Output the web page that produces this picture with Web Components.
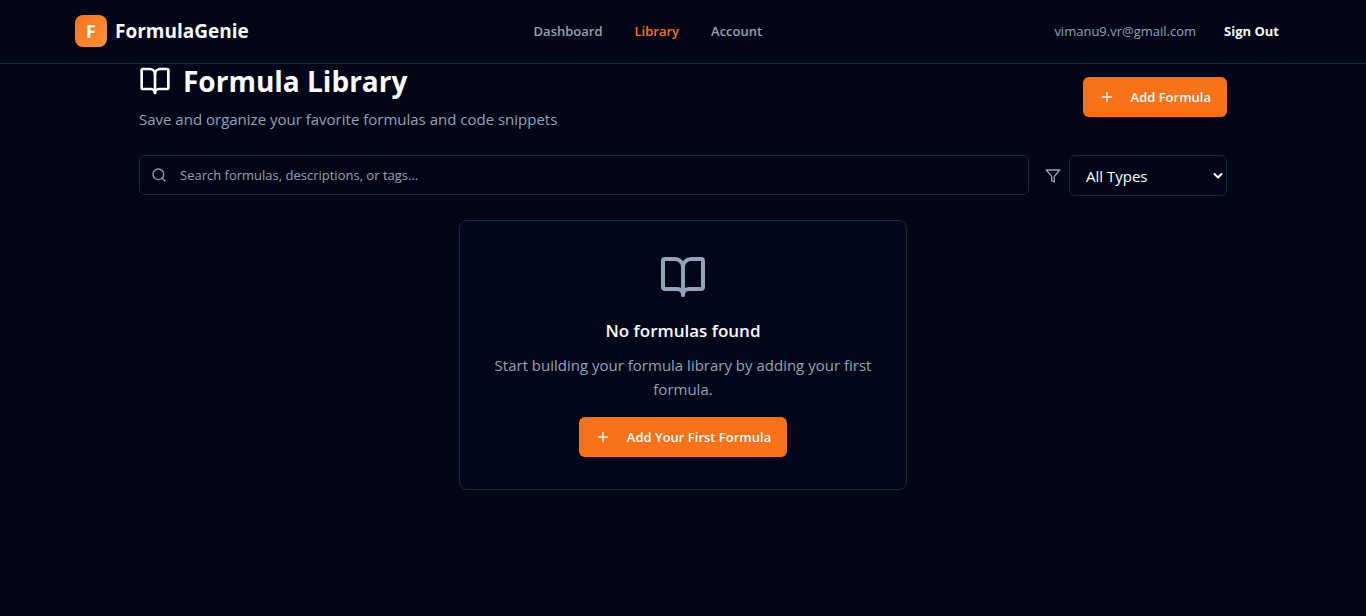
<!DOCTYPE html>
<html lang="en">
<head>
<meta charset="utf-8">
<meta name="viewport" content="width=device-width, initial-scale=1">
<title>FormulaGenie</title>
<style>
  :root {
    --bg: #020617;
    --card: #020819;
    --border: #1e293b;
    --fg: #f8fafc;
    --muted: #94a3b8;
    --accent: #f97316;
    --text-sm: 13px;
    --text-md: 15px;
  }
  body {
    margin: 0;
    min-height: 100vh;
    background: var(--bg);
    color: var(--fg);
    font-family: "Open Sans", "Noto Sans", sans-serif;
    font-size: var(--text-md);
    line-height: 24px;
  }
</style>
</head>
<body>
<fg-app></fg-app>
<script>
const ICONS = {
  book: '<path d="M12 7v14"/><path d="M3 18a1 1 0 0 1-1-1V4a1 1 0 0 1 1-1h5a4 4 0 0 1 4 4 4 4 0 0 1 4-4h5a1 1 0 0 1 1 1v13a1 1 0 0 1-1 1h-6a3 3 0 0 0-3 3 3 3 0 0 0-3-3z"/>',
  plus: '<path d="M5 12h14"/><path d="M12 5v14"/>',
  search: '<circle cx="11" cy="11" r="8"/><path d="m21 21-4.3-4.3"/>',
  filter: '<polygon points="22 3 2 3 10 12.46 10 19 14 21 14 12.46 22 3"/>',
  chevron: '<path d="m5 8 7 7 7-7"/>'
};

function define(name, html, setup) {
  const template = document.createElement('template');
  template.innerHTML = html;
  customElements.define(name, class extends HTMLElement {
    constructor() {
      super();
      this.attachShadow({ mode: 'open' }).append(template.content.cloneNode(true));
    }
    connectedCallback() {
      if (setup) setup(this, this.shadowRoot);
    }
  });
}

define('fg-icon', `
  <style>
    :host { display: block; flex: none; width: var(--icon-size, 16px); height: var(--icon-size, 16px); }
    svg { display: block; width: 100%; height: 100%; }
  </style>
  <svg viewBox="0 0 24 24" fill="none" stroke="currentColor" stroke-width="2" stroke-linecap="round" stroke-linejoin="round" aria-hidden="true"></svg>
`, (host, root) => {
  const svg = root.querySelector('svg');
  svg.innerHTML = ICONS[host.getAttribute('name')];
  if (host.hasAttribute('weight')) svg.setAttribute('stroke-width', host.getAttribute('weight'));
});

define('fg-button', `
  <style>
    :host { display: block; flex: none; }
    button {
      display: flex; align-items: center; gap: 16px;
      height: 40px; padding: 0 16px; border: 0; border-radius: 6px;
      background: var(--accent); color: var(--fg);
      font-family: inherit; font-size: var(--text-sm); font-weight: 600;
      white-space: nowrap; cursor: pointer;
    }
  </style>
  <button type="button"><fg-icon name="plus"></fg-icon><slot></slot></button>
`);

define('fg-header', `
  <style>
    :host { display: block; border-bottom: 1px solid var(--border); margin-bottom: -1px; }
    .bar {
      display: flex; align-items: center; justify-content: space-between;
      box-sizing: border-box; max-width: 1280px; height: 63px; margin: 0 auto; padding: 0 32px 1px;
    }
    a { color: inherit; text-decoration: none; }
    .brand { display: flex; align-items: center; gap: 8px; font-size: 19px; font-weight: 700; }
    .mark {
      display: grid; place-items: center; width: 32px; height: 32px; border-radius: 8px;
      background: linear-gradient(135deg, #f97316, #fb923c); font-size: 18px;
    }
    nav { display: flex; gap: 32px; color: var(--muted); font-size: var(--text-sm); font-weight: 600; }
    nav a[aria-current] { color: var(--accent); }
    .user {
      display: flex; align-items: center; justify-content: flex-end; gap: 16px; min-width: 244px;
      color: var(--muted); font-size: var(--text-sm);
    }
    button {
      height: 36px; padding: 0 12px; border: 0; background: none; color: var(--fg);
      font-family: inherit; font-size: var(--text-sm); font-weight: 700; cursor: pointer;
    }
  </style>
  <header class="bar">
    <a class="brand" href="#home"><span class="mark">F</span><span>FormulaGenie</span></a>
    <nav>
      <a href="#dashboard">Dashboard</a>
      <a href="#library" aria-current="page">Library</a>
      <a href="#account">Account</a>
    </nav>
    <div class="user"><span>vimanu9.vr@gmail.com</span><button type="button">Sign Out</button></div>
  </header>
`);

define('fg-page-title', `
  <style>
    :host { display: flex; align-items: center; justify-content: space-between; gap: 16px; }
    h1 {
      display: flex; align-items: center; gap: 12px; margin: 0 0 8px;
      font-size: 28px; line-height: 36px; font-weight: 700; --icon-size: 32px;
    }
    p { margin: 0; color: var(--muted); }
  </style>
  <div>
    <h1><fg-icon name="book"></fg-icon><slot name="title"></slot></h1>
    <p><slot name="subtitle"></slot></p>
  </div>
  <slot name="action"></slot>
`);

define('fg-filters', `
  <style>
    :host { display: flex; align-items: flex-start; gap: 16px; }
    .search {
      flex: 1; display: flex; align-items: center; gap: 13px;
      box-sizing: border-box; height: 40px; padding: 0 11px;
      border: 1px solid var(--border); border-radius: 6px; color: var(--muted);
    }
    input {
      flex: 1; min-width: 0; padding: 0; border: 0; outline: 0; background: none;
      color: var(--fg); font-family: inherit; font-size: var(--text-sm); line-height: 20px;
    }
    input::placeholder { color: var(--muted); opacity: 1; }
    .type { display: flex; align-items: center; gap: 8px; color: var(--muted); }
    .pick { display: grid; align-items: center; color: #fff; --icon-size: 12px; }
    .pick > * { grid-area: 1 / 1; }
    .pick fg-icon { justify-self: end; margin-right: 3px; pointer-events: none; }
    select {
      appearance: none; box-sizing: border-box; width: 158px; height: 41px; padding: 0 16px;
      border: 1px solid var(--border); border-radius: 6px; background: var(--bg);
      color: #fff; font-family: inherit; font-size: var(--text-md);
    }
  </style>
  <label class="search">
    <fg-icon name="search"></fg-icon>
    <input type="search" aria-label="Search formulas" placeholder="Search formulas, descriptions, or tags...">
  </label>
  <div class="type">
    <fg-icon name="filter"></fg-icon>
    <div class="pick">
      <select aria-label="Formula type"><option>All Types</option></select>
      <fg-icon name="chevron" weight="4"></fg-icon>
    </div>
  </div>
`);

define('fg-empty-state', `
  <style>
    :host {
      display: flex; flex-direction: column; align-items: center; box-sizing: border-box;
      width: 100%; max-width: 448px; margin: 0 auto; padding: 32px;
      border: 1px solid var(--border); border-radius: 8px; background: var(--card); text-align: center;
    }
    .art { color: var(--muted); --icon-size: 48px; }
    h2 { margin: 16px 0 8px; font-size: 17px; line-height: 28px; font-weight: 600; }
    p { margin: 0 0 16px; color: var(--muted); }
  </style>
  <fg-icon class="art" name="book"></fg-icon>
  <h2><slot name="title"></slot></h2>
  <p><slot></slot></p>
  <slot name="action"></slot>
`);

define('fg-app', `
  <style>
    :host { display: block; }
    main {
      display: flex; flex-direction: column; gap: 24px;
      box-sizing: border-box; max-width: 1152px; margin: 0 auto; padding: 0 32px 32px;
    }
  </style>
  <fg-header></fg-header>
  <main>
    <fg-page-title>
      <span slot="title">Formula Library</span>
      <span slot="subtitle">Save and organize your favorite formulas and code snippets</span>
      <fg-button slot="action">Add Formula</fg-button>
    </fg-page-title>
    <fg-filters></fg-filters>
    <fg-empty-state>
      <span slot="title">No formulas found</span>
      Start building your formula library by adding your first formula.
      <fg-button slot="action">Add Your First Formula</fg-button>
    </fg-empty-state>
  </main>
`);
</script>
</body>
</html>
